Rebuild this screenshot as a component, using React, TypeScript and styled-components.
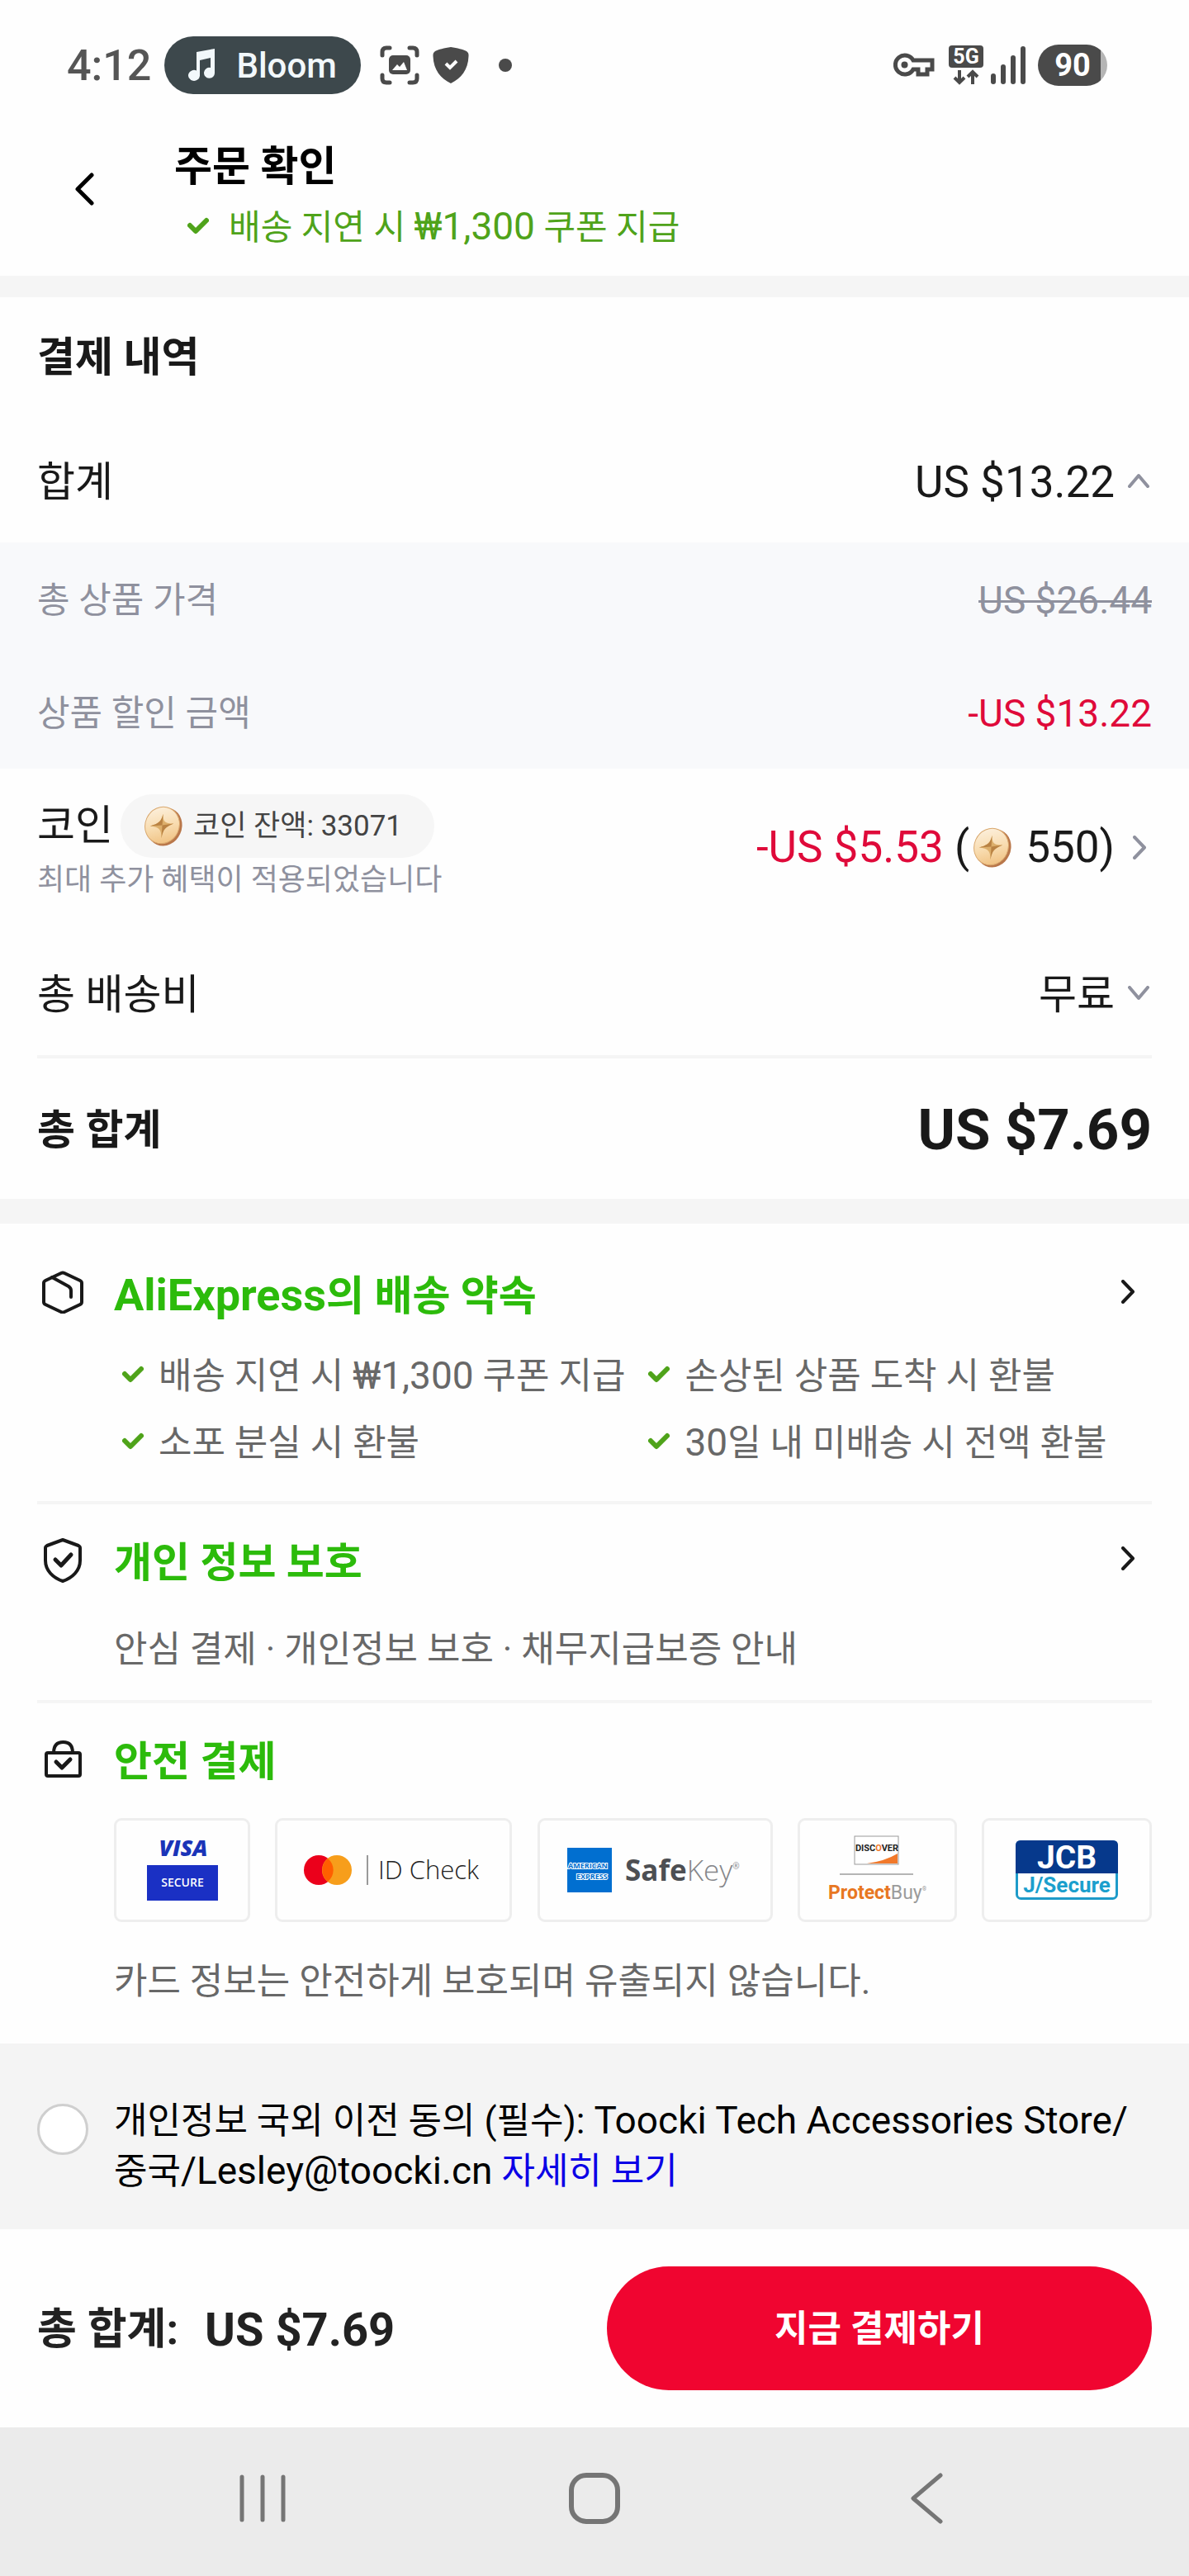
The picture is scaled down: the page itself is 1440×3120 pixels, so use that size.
import React, { useState } from "react";
import styled, { createGlobalStyle } from "styled-components";

const FONT = `Roboto, "Noto Sans CJK KR", sans-serif`;

const GlobalStyle = createGlobalStyle`
  *, *::before, *::after { box-sizing: border-box; }
  body {
    margin: 0;
    background: #fefefe;
    color: #191919;
    font-family: ${FONT};
  }
  h1, h2, p, ul { margin: 0; padding: 0; font-weight: inherit; }
  button { margin: 0; padding: 0; border: 0; background: none; color: inherit; font: inherit; cursor: pointer; }
  svg { display: block; flex: none; }
`;

/* ---------- status bar ---------- */

const StatusBar = styled.div`
  display: flex;
  align-items: center;
  height: 158px;
  padding: 0 99px 0 81px;
  color: #555;
`;
const Clock = styled.span`
  font-size: 52px;
  font-weight: 500;
  margin-right: 16px;
`;
const NowPlaying = styled.div`
  display: flex;
  align-items: center;
  gap: 25px;
  height: 70px;
  padding: 0 29px 0 28px;
  margin-right: 23px;
  border-radius: 35px;
  background: #3d484c;
  color: #f2f8fb;
  font-size: 42px;
  font-weight: 500;
`;
const NoticeIcons = styled.div`
  display: flex;
  align-items: center;
  gap: 16px;
`;
const Dot = styled.span`
  width: 16px;
  height: 16px;
  margin-left: 20px;
  border-radius: 50%;
  background: #4a4a4a;
`;
const StatusRight = styled.div`
  display: flex;
  align-items: center;
  gap: 9px;
  margin-left: auto;
`;
const KeySlot = styled.span`
  margin-right: 8px;
`;
const Battery = styled.span`
  display: flex;
  align-items: center;
  justify-content: center;
  width: 84px;
  height: 50px;
  margin-left: 6px;
  border-radius: 25px;
  background: linear-gradient(90deg, #4a4a4a 90%, #b5b5b5 90%);
  color: #fff;
  font-size: 38px;
  font-weight: 700;
`;

/* ---------- header ---------- */

const Header = styled.header`
  display: flex;
  align-items: flex-start;
  gap: 52px;
  padding: 14px 45px 30px;
`;
const BackButton = styled.button`
  display: flex;
  align-items: center;
  justify-content: center;
  width: 114px;
  height: 114px;
  color: #000;
`;
const PageTitle = styled.h1`
  font-size: 50px;
  line-height: 60px;
  font-weight: 700;
  color: #000;
`;
const HeaderNote = styled.p`
  display: flex;
  align-items: center;
  gap: 24px;
  margin-top: 16px;
  padding-left: 16px;
  font-size: 42px;
  line-height: 56px;
  color: #4fa31a;
`;
const Latin = styled.span<{ $size: number }>`
  font-size: ${(p) => p.$size}px;
  line-height: 0;
`;

/* ---------- payment summary ---------- */

const Band = styled.div<{ $height: number }>`
  height: ${(p) => p.$height}px;
  background: #f5f5f5;
`;
const SectionTitle = styled.h2`
  padding: 0 45px;
  font-size: 50px;
  line-height: 147px;
  font-weight: 700;
`;
const Row = styled.div<{ $height: number; $muted?: boolean; $strong?: boolean }>`
  display: flex;
  align-items: center;
  justify-content: space-between;
  height: ${(p) => p.$height}px;
  padding: 3px 45px 0;
  font-size: ${(p) => (p.$muted ? 43 : 50)}px;
  line-height: 60px;
  font-weight: ${(p) => (p.$strong ? 700 : 400)};
  color: ${(p) => (p.$muted ? "#8f919e" : "#191919")};
`;
const Details = styled.div`
  background: #f8f9fb;
`;
const Price = styled.span<{ $size: number; $red?: boolean }>`
  font-size: ${(p) => p.$size}px;
  color: ${(p) => (p.$red ? "#df0a3a" : "inherit")};
`;
const OldPrice = styled.s`
  font-size: 46px;
  text-decoration-thickness: 3px;
`;
const ToggleValue = styled.button`
  display: flex;
  align-items: center;
  gap: 16px;
  padding-right: 3px;
`;
const CoinRow = styled.div`
  display: flex;
  align-items: center;
  justify-content: space-between;
  padding: 31px 45px 38px;
`;
const CoinLabel = styled.div`
  display: flex;
  align-items: center;
  gap: 9px;
  font-size: 50px;
  line-height: 77px;
`;
const CoinBalance = styled.span`
  display: flex;
  align-items: center;
  gap: 12px;
  height: 77px;
  padding: 0 39px 0 27px;
  border-radius: 39px;
  background: #f6f6f6;
  color: #444;
  font-size: 35px;
`;
const CoinNote = styled.p`
  margin-top: 3px;
  font-size: 36px;
  line-height: 48px;
  color: #8f919e;
`;
const CoinAmount = styled.button`
  display: flex;
  align-items: center;
  font-size: 53px;
  line-height: 60px;
  white-space: pre;
`;
const UsedCoin = styled.span`
  margin: 0 3px;
`;
const CoinChevron = styled.span`
  margin: 0 6px 0 22px;
`;
const GreyMark = styled.span`
  padding-bottom: 4px;
  color: #8f919e;
`;
const Divider = styled.hr`
  height: 4px;
  margin: 0 45px;
  border: 0;
  background: #f5f5f5;
`;

/* ---------- guarantees ---------- */

const Guarantee = styled.section<{ $top: number; $bottom: number }>`
  display: grid;
  grid-template-columns: 62px 1fr;
  column-gap: 31px;
  padding: ${(p) => p.$top}px 45px ${(p) => p.$bottom}px;
`;
const GuaranteeHead = styled.div`
  display: flex;
  align-items: center;
  justify-content: space-between;
  height: 60px;
  padding-right: 20px;
`;
const GuaranteeTitle = styled.h2`
  padding-top: 2px;
  font-size: 50px;
  line-height: 60px;
  font-weight: 700;
  color: #2cbb0b;
`;
const MoreButton = styled.button`
  padding-bottom: 10px;
  color: #191919;
`;
const GuaranteeBody = styled.div<{ $gap: number }>`
  grid-column: 2;
  margin-top: ${(p) => p.$gap}px;
  font-size: 44px;
  line-height: 56px;
  color: #686868;
`;
const Benefits = styled.ul`
  display: grid;
  grid-template-columns: max-content max-content;
  gap: 25px 28px;
  padding-left: 10px;
  list-style: none;
`;
const Benefit = styled.li`
  display: flex;
  align-items: center;
  gap: 18px;
`;
const CardList = styled.ul`
  display: flex;
  justify-content: space-between;
  gap: 29px;
  list-style: none;
`;
const CardBadge = styled.li<{ $width: number }>`
  display: flex;
  align-items: center;
  justify-content: center;
  flex: 0 1 ${(p) => p.$width}px;
  height: 126px;
  border: 3px solid #eeeeee;
  border-radius: 9px;
`;
const CardNote = styled.p`
  margin-top: 44px;
`;

/* ---------- consent, checkout, navigation ---------- */

const Consent = styled.div`
  display: flex;
  align-items: flex-start;
  gap: 31px;
  padding: 64px 45px 39px;
  background: #f4f4f4;
`;
const ConsentBox = styled.input`
  appearance: none;
  flex: none;
  width: 62px;
  height: 62px;
  margin: 9px 0 0;
  border: 3px solid #cfcfcf;
  border-radius: 50%;
  background: #fff;
  &:checked {
    border: 18px solid #f00530;
  }
`;
const ConsentText = styled.p`
  font-size: 44px;
  line-height: 61px;
  color: #000;
`;
const ConsentLink = styled.a`
  color: #0b00e6;
  text-decoration: none;
`;
const Checkout = styled.footer`
  display: flex;
  align-items: center;
  justify-content: space-between;
  padding: 45px;
`;
const CheckoutTotal = styled.div`
  display: flex;
  align-items: center;
  gap: 32px;
  padding-top: 3px;
  font-size: 52px;
  line-height: 60px;
  font-weight: 700;
  color: #222;
`;
const PayButton = styled.button`
  width: 660px;
  height: 150px;
  padding-top: 2px;
  border-radius: 75px;
  background: #f00530;
  color: #fff;
  font-size: 44px;
  line-height: 60px;
  font-weight: 700;
`;
const SystemNav = styled.nav`
  display: grid;
  grid-template-columns: repeat(3, 1fr);
  height: 180px;
  padding: 0 117px;
  background: #ebebeb;
  color: #757575;
`;
const NavButton = styled.button`
  display: flex;
  align-items: center;
  justify-content: center;
  padding-bottom: 8px;
`;

/* ---------- icons ---------- */

const Tick = () => (
  <svg width="26" height="26" viewBox="0 0 26 26" fill="none" stroke="#4fa31a" strokeWidth="6" strokeLinecap="round" strokeLinejoin="round">
    <path d="M3 10 L10 17 L23 4" />
  </svg>
);

const chevrons = {
  up: { w: 26, h: 18, d: "M2 16 L13 3 L24 16" },
  down: { w: 26, h: 18, d: "M2 2 L13 15 L24 2" },
  right: { w: 17, h: 29, d: "M2 2 L14 14.5 L2 27" },
  left: { w: 24, h: 40, d: "M21 3 L4 20 L21 37" },
};
const Chevron = ({ dir, stroke = 4 }: { dir: keyof typeof chevrons; stroke?: number }) => {
  const c = chevrons[dir];
  return (
    <svg width={c.w} height={c.h} viewBox={`0 0 ${c.w} ${c.h}`} fill="none" stroke="currentColor" strokeWidth={stroke} strokeLinecap="round" strokeLinejoin="round">
      <path d={c.d} />
    </svg>
  );
};

const Coin = ({ size, id }: { size: number; id: string }) => (
  <svg width={size} height={size} viewBox="0 0 50 50">
    <defs>
      <linearGradient id={id} x1="0.1" y1="0" x2="0.8" y2="1">
        <stop offset="0" stopColor="#fdf3e4" />
        <stop offset="0.55" stopColor="#f8dcb0" />
        <stop offset="1" stopColor="#efbe7c" />
      </linearGradient>
    </defs>
    <ellipse cx="27" cy="26" rx="21" ry="24" transform="rotate(24 27 26)" fill="#b9774a" />
    <ellipse cx="24" cy="24" rx="21" ry="23" transform="rotate(24 24 24)" fill={`url(#${id})`} stroke="#d9a76c" strokeWidth="1" />
    <path d="M25 10 C25 20 27 22 38 22 C28 26 25 29 23 40 C23 29 20 26 9 25 C20 22 23 19 25 10 Z" fill="#dcae6a" />
    <path d="M25 10 L24 24 L38 22 C28 26 25 29 23 40 L24 24 L9 25 C20 22 23 19 25 10 Z" fill="#b98243" />
  </svg>
);

const MusicIcon = () => (
  <svg width="34" height="40" viewBox="0 0 34 40" fill="currentColor">
    <path d="M11 4 L33 0 V29 A6.5 6.5 0 1 1 28 23 V11 L15 14 V33 A7 6.5 0 1 1 11 26.5 Z" />
  </svg>
);

const CaptureIcon = () => (
  <svg width="48" height="48" viewBox="0 0 48 48" fill="none" stroke="#4a4a4a" strokeWidth="5" strokeLinecap="round">
    <path d="M3 12 V8 Q3 3 8 3 H12 M36 3 H40 Q45 3 45 8 V12 M45 36 V40 Q45 45 40 45 H36 M12 45 H8 Q3 45 3 40 V36" />
    <rect x="11" y="12" width="26" height="23" rx="5" fill="#4a4a4a" stroke="none" />
    <path d="M15 30 L21 23 L24 26 L29 20 L33 30 Z" fill="#fff" stroke="none" />
  </svg>
);

const ShieldIcon = () => (
  <svg width="44" height="44" viewBox="0 0 44 44">
    <path d="M22 0 C30 1 37 3 41 5 Q44 7 43.5 11 C43 28 34 38 22 44 C10 38 1 28 0.5 11 Q0 7 3 5 C7 3 14 1 22 0 Z" fill="#4a4a4a" />
    <path d="M16 20 L21 25 L29 17" fill="none" stroke="#fff" strokeWidth="4" />
  </svg>
);

const KeyIcon = () => (
  <svg width="50" height="30" viewBox="0 0 50 30" fill="none" stroke="#4a4a4a" strokeWidth="5">
    <path d="M24 9 A11.5 11.5 0 1 0 24 20 H30 V26 H41 V20 H47 V9 Z" />
    <circle cx="13.5" cy="14.5" r="4" fill="#4a4a4a" stroke="none" />
  </svg>
);

const NetworkIcon = () => (
  <svg width="42" height="48" viewBox="0 0 42 48">
    <rect width="42" height="27" rx="4" fill="#4a4a4a" />
    <text x="21" y="22" textAnchor="middle" fontFamily="Roboto, sans-serif" fontSize="25" fontWeight="700" fill="#fff">5G</text>
    <path d="M13 30 V45 M7 39 L13 45 L19 39 M29 47 V32 M23 38 L29 32 L35 38" fill="none" stroke="#4a4a4a" strokeWidth="4" />
  </svg>
);

const SignalIcon = () => (
  <svg width="42" height="46" viewBox="0 0 42 46" stroke="#4a4a4a" strokeWidth="6" strokeLinecap="round">
    <path d="M3 36 V43 M15 25 V43 M27 14 V43 M39 3 V43" />
  </svg>
);

const PackageIcon = () => (
  <svg width="62" height="52" viewBox="0 0 62 52" fill="none" stroke="#191919" strokeWidth="4" strokeLinejoin="round" strokeLinecap="round">
    <path d="M29 3 Q31 2 33 3 L52 12 Q54 13 54 15 V38 Q54 40 52 41 L33 50 Q31 51 29 50 L10 41 Q8 40 8 38 V15 Q8 13 10 12 Z" />
    <path d="M18 8 L38 19 Q41 21 41 24 V32" />
  </svg>
);

const PrivacyIcon = () => (
  <svg width="62" height="56" viewBox="0 0 62 56" fill="none" stroke="#191919" strokeWidth="4" strokeLinejoin="round" strokeLinecap="round">
    <path d="M31 3 L50 10 Q52 11 52 13 V28 C52 40 43 49 31 53 C19 49 10 40 10 28 V13 Q10 11 12 10 Z" />
    <path d="M22 27 L29 34 L41 21" strokeWidth="5" />
  </svg>
);

const BagIcon = () => (
  <svg width="62" height="52" viewBox="0 0 62 52" fill="none" stroke="#191919" strokeWidth="4" strokeLinejoin="round" strokeLinecap="round">
    <rect x="11" y="20" width="41" height="28" rx="2" />
    <path d="M20 20 Q20 7 31.5 7 Q43 7 43 20" />
    <path d="M23 31 L30 38 L40 28" strokeWidth="5" />
  </svg>
);

/* ---------- card scheme logos ---------- */

const VisaLogo = () => (
  <svg width="86" height="98" viewBox="0 -10 86 98" role="img" aria-label="Visa Secure">
    <text x="44" y="22" textAnchor="middle" fontFamily="Open Sans, sans-serif" fontSize="27" fontWeight="800" fontStyle="italic" fill="#1a34b8">VISA</text>
    <rect y="33" width="86" height="43" fill="#1a30c4" />
    <text x="43" y="59" textAnchor="middle" fontFamily="Open Sans, sans-serif" fontSize="14" fontWeight="600" fill="#fff">SECURE</text>
  </svg>
);

const MastercardLogo = () => (
  <svg width="218" height="42" viewBox="0 0 218 42" role="img" aria-label="Mastercard ID Check">
    <circle cx="18" cy="21" r="18" fill="#eb001b" />
    <circle cx="40" cy="21" r="18" fill="#f79e1b" />
    <path d="M29 7 A18 18 0 0 1 29 35 A18 18 0 0 1 29 7 Z" fill="#ff5f00" />
    <path d="M77 3 V39" stroke="#9a9a9a" strokeWidth="2" />
    <text x="90" y="32" fontFamily="Open Sans, sans-serif" fontSize="31" fontWeight="300" fill="#222">ID Check</text>
  </svg>
);

const AmexLogo = () => (
  <svg width="212" height="54" viewBox="0 0 212 54" role="img" aria-label="American Express SafeKey">
    <rect width="54" height="54" fill="#016fd0" />
    <g fontFamily="Open Sans, sans-serif" fontSize="9" fontWeight="700" fill="#016fd0" stroke="#fff" strokeWidth="2" paintOrder="stroke">
      <text x="1" y="25">AMERICAN</text>
      <text x="11" y="38">EXPRESS</text>
    </g>
    <text x="70" y="40" fontFamily="Open Sans, sans-serif" fontSize="35" fill="#85868a">
      <tspan fontWeight="700" fill="#4d4f53">Safe</tspan>
      <tspan fontWeight="300">Key</tspan>
      <tspan fontSize="10" dy="-14">®</tspan>
    </text>
  </svg>
);

const DiscoverLogo = () => (
  <svg width="120" height="86" viewBox="0 0 120 86" role="img" aria-label="Discover ProtectBuy">
    <rect x="33" y="2" width="53" height="34" fill="#fff" stroke="#999" strokeWidth="1" />
    <path d="M85 23 V35 H48 Q70 32 85 23 Z" fill="#f1792b" />
    <text x="60" y="20" textAnchor="middle" fontFamily="Roboto, sans-serif" fontSize="11" fontWeight="700" fill="#222">
      DISC<tspan fill="#f1792b">O</tspan>VER
    </text>
    <path d="M15 48 H104" stroke="#b5b5b5" strokeWidth="2" />
    <text x="1" y="78" fontFamily="Roboto, sans-serif" fontSize="23" fill="#9b9b9b">
      <tspan fontWeight="700" fill="#e87722">Protect</tspan>Buy<tspan fontSize="7" dy="-10">®</tspan>
    </text>
  </svg>
);

const JcbLogo = () => (
  <svg width="124" height="84" viewBox="0 -6 124 84" role="img" aria-label="JCB J/Secure">
    <rect x="1.5" y="1.5" width="121" height="69" rx="5" fill="#fff" stroke="#1e9bc9" strokeWidth="3" />
    <path d="M0 40 V6 Q0 0 6 0 H118 Q124 0 124 6 V40 Z" fill="#06398c" />
    <text x="62" y="34" textAnchor="middle" fontFamily="Roboto, sans-serif" fontSize="39" fontWeight="700" fill="#fff">JCB</text>
    <text x="62" y="63" textAnchor="middle" fontFamily="Roboto, sans-serif" fontSize="26" fontWeight="700" fill="#1b9fcd">J/Secure</text>
  </svg>
);

const benefits = [
  <>배송 지연 시 <Latin $size={46}>₩1,300</Latin> 쿠폰 지급</>,
  <>손상된 상품 도착 시 환불</>,
  <>소포 분실 시 환불</>,
  <><Latin $size={46}>30</Latin>일 내 미배송 시 전액 환불</>,
];

const cards = [
  { name: "visa", width: 165, logo: <VisaLogo /> },
  { name: "mastercard", width: 287, logo: <MastercardLogo /> },
  { name: "amex", width: 285, logo: <AmexLogo /> },
  { name: "discover", width: 193, logo: <DiscoverLogo /> },
  { name: "jcb", width: 206, logo: <JcbLogo /> },
];

export default function App() {
  const [agreed, setAgreed] = useState(false);

  return (
    <>
      <GlobalStyle />
      <StatusBar>
        <Clock>4:12</Clock>
        <NowPlaying><MusicIcon />Bloom</NowPlaying>
        <NoticeIcons>
          <CaptureIcon />
          <ShieldIcon />
          <Dot />
        </NoticeIcons>
        <StatusRight>
          <KeySlot><KeyIcon /></KeySlot>
          <NetworkIcon />
          <SignalIcon />
          <Battery>90</Battery>
        </StatusRight>
      </StatusBar>

      <Header>
        <BackButton aria-label="뒤로"><Chevron dir="left" stroke={5} /></BackButton>
        <div>
          <PageTitle>주문 확인</PageTitle>
          <HeaderNote>
            <Tick />
            <span>배송 지연 시 <Latin $size={46}>₩1,300</Latin> 쿠폰 지급</span>
          </HeaderNote>
        </div>
      </Header>

      <Band $height={26} />

      <main>
        <section>
          <SectionTitle>결제 내역</SectionTitle>
          <Row $height={150}>
            <span>합계</span>
            <ToggleValue aria-expanded="true">
              <Price $size={53}>US $13.22</Price>
              <GreyMark><Chevron dir="up" /></GreyMark>
            </ToggleValue>
          </Row>
          <Details>
            <Row $height={137} $muted>
              <span>총 상품 가격</span>
              <OldPrice>US $26.44</OldPrice>
            </Row>
            <Row $height={137} $muted>
              <span>상품 할인 금액</span>
              <Price $size={46} $red>-US $13.22</Price>
            </Row>
          </Details>
          <CoinRow>
            <div>
              <CoinLabel>
                코인
                <CoinBalance><Coin size={49} id="coin-balance" />코인 잔액: 33071</CoinBalance>
              </CoinLabel>
              <CoinNote>최대 추가 혜택이 적용되었습니다</CoinNote>
            </div>
            <CoinAmount>
              <Price $size={53} $red>-US $5.53</Price>
              {" ("}
              <UsedCoin><Coin size={49} id="coin-used" /></UsedCoin>
              {" 550)"}
              <CoinChevron><GreyMark><Chevron dir="right" /></GreyMark></CoinChevron>
            </CoinAmount>
          </CoinRow>
          <Row $height={150}>
            <span>총 배송비</span>
            <ToggleValue aria-expanded="false">
              무료
              <GreyMark><Chevron dir="down" /></GreyMark>
            </ToggleValue>
          </Row>
          <Divider />
          <Row $height={170} $strong>
            <span>총 합계</span>
            <Price $size={69}>US $7.69</Price>
          </Row>
        </section>

        <Band $height={30} />

        <Guarantee $top={57} $bottom={42}>
          <PackageIcon />
          <GuaranteeHead>
            <GuaranteeTitle><Latin $size={54}>AliExpress</Latin>의 배송 약속</GuaranteeTitle>
            <MoreButton aria-label="배송 약속 보기"><Chevron dir="right" /></MoreButton>
          </GuaranteeHead>
          <GuaranteeBody $gap={40}>
            <Benefits>
              {benefits.map((text, i) => (
                <Benefit key={i}><Tick /><span>{text}</span></Benefit>
              ))}
            </Benefits>
          </GuaranteeBody>
        </Guarantee>
        <Divider />
        <Guarantee $top={40} $bottom={33}>
          <PrivacyIcon />
          <GuaranteeHead>
            <GuaranteeTitle>개인 정보 보호</GuaranteeTitle>
            <MoreButton aria-label="개인 정보 보호 보기"><Chevron dir="right" /></MoreButton>
          </GuaranteeHead>
          <GuaranteeBody $gap={48}>안심 결제 · 개인정보 보호 · 채무지급보증 안내</GuaranteeBody>
        </Guarantee>
        <Divider />
        <Guarantee $top={40} $bottom={47}>
          <BagIcon />
          <GuaranteeHead>
            <GuaranteeTitle>안전 결제</GuaranteeTitle>
          </GuaranteeHead>
          <GuaranteeBody $gap={39}>
            <CardList>
              {cards.map((c) => (
                <CardBadge key={c.name} $width={c.width}>{c.logo}</CardBadge>
              ))}
            </CardList>
            <CardNote>카드 정보는 안전하게 보호되며 유출되지 않습니다.</CardNote>
          </GuaranteeBody>
        </Guarantee>

        <Consent>
          <ConsentBox id="consent" type="checkbox" checked={agreed} onChange={(e) => setAgreed(e.target.checked)} />
          <ConsentText>
            <label htmlFor="consent">
              개인정보 국외 이전 동의 (필수): <Latin $size={46}>Toocki Tech Accessories Store/</Latin>
              <wbr />중국<Latin $size={46}>/Lesley@toocki.cn</Latin>
            </label>{" "}
            <ConsentLink href="#details">자세히 보기</ConsentLink>
          </ConsentText>
        </Consent>
      </main>

      <Checkout>
        <CheckoutTotal>
          <span>총 합계:</span>
          <Price $size={56}>US $7.69</Price>
        </CheckoutTotal>
        <PayButton>지금 결제하기</PayButton>
      </Checkout>

      <SystemNav>
        <NavButton aria-label="최근 앱">
          <svg width="56" height="58" viewBox="0 0 56 58" stroke="currentColor" strokeWidth="5" strokeLinecap="round">
            <path d="M3 3 V55 M28 3 V55 M53 3 V55" />
          </svg>
        </NavButton>
        <NavButton aria-label="홈">
          <svg width="62" height="62" viewBox="0 0 62 62" fill="none" stroke="currentColor" strokeWidth="6">
            <rect x="3" y="3" width="56" height="56" rx="18" />
          </svg>
        </NavButton>
        <NavButton aria-label="뒤로">
          <svg width="40" height="62" viewBox="0 0 40 62" fill="none" stroke="currentColor" strokeWidth="5" strokeLinecap="round" strokeLinejoin="round">
            <path d="M37 3 L4 31 L37 59" />
          </svg>
        </NavButton>
      </SystemNav>
    </>
  );
}
